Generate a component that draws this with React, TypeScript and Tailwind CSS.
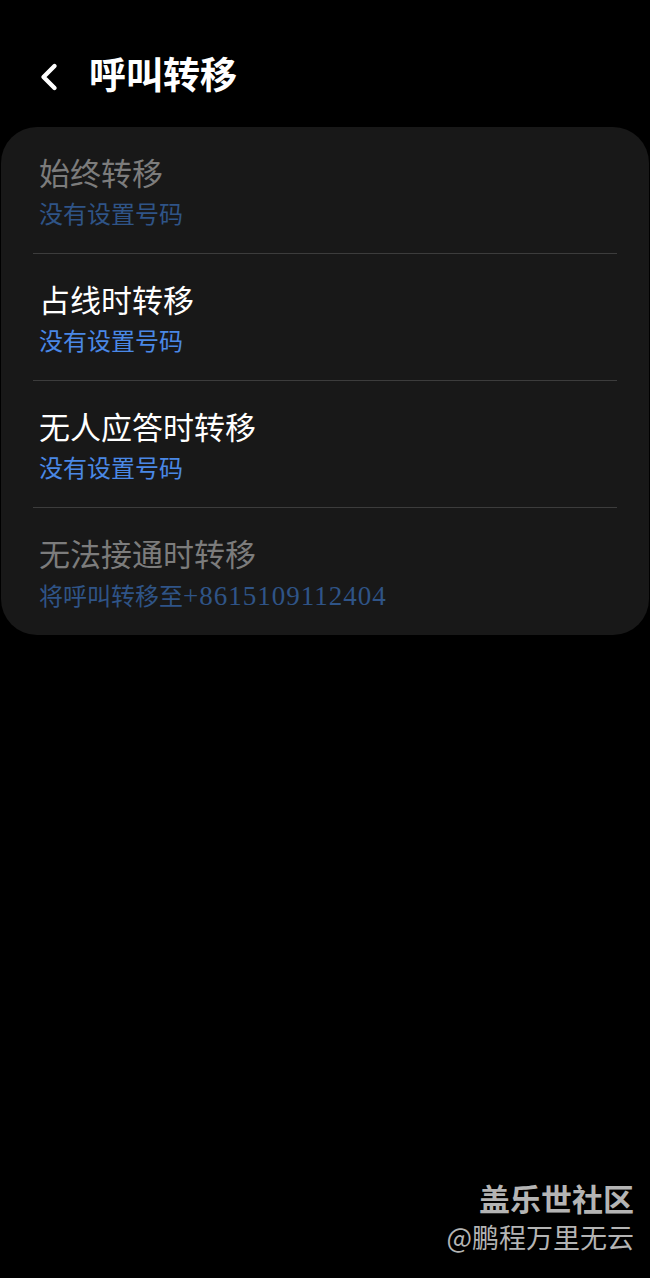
import { ChevronLeft } from "lucide-react";

const rows = [
  { title: "始终转移", sub: "没有设置号码", enabled: false },
  { title: "占线时转移", sub: "没有设置号码", enabled: true },
  { title: "无人应答时转移", sub: "没有设置号码", enabled: true },
  { title: "无法接通时转移", sub: "将呼叫转移至+8615109112404", enabled: false },
];

const font = { fontFamily: '"Liberation Serif", "Noto Sans CJK SC", serif' };

export default function App() {
  return (
    <div className="relative w-[650px] h-[1278px] bg-black overflow-hidden" style={font}>
      {/* Header */}
      <div className="flex items-center h-[127px] pt-[26px] pl-[27px]">
        <ChevronLeft className="w-[44px] h-[44px] text-white" strokeWidth={2.4} />
        <span className="ml-[18px] text-[37px] font-bold text-white leading-none">呼叫转移</span>
      </div>

      {/* Settings card */}
      <div className="mx-[1px] rounded-[36px] bg-[#181818] px-[32px]">
        {rows.map((row, i) => (
          <div
            key={row.title}
            className={`h-[127px] pl-[6px] pt-[28px] ${i < rows.length - 1 ? "border-b border-[#3c3c3c]" : ""}`}
          >
            <div className={`text-[31px] leading-[40px] ${row.enabled ? "text-white" : "text-[#7c7c7c]"}`}>
              {row.title}
            </div>
            <div
              className={`mt-[4px] text-[24px] leading-[32px] ${row.enabled ? "text-[#4a88e6]" : "text-[#2f5487]"}`}
            >
              {row.sub.replace(/\+.*/, "")}
              {row.sub.includes("+") && (
                <span className="text-[27px] tracking-[1px]">{row.sub.slice(row.sub.indexOf("+"))}</span>
              )}
            </div>
          </div>
        ))}
      </div>

      {/* Watermark */}
      <div
        className="absolute right-[16px] bottom-[22px] flex flex-col items-end text-[#b4b4b4]"
        style={{ fontFamily: '"Noto Sans CJK SC", sans-serif' }}
      >
        <span className="text-[31px] font-bold leading-[40px]">盖乐世社区</span>
        <span className="text-[27px] leading-[38px]">@鹏程万里无云</span>
      </div>
    </div>
  );
}
